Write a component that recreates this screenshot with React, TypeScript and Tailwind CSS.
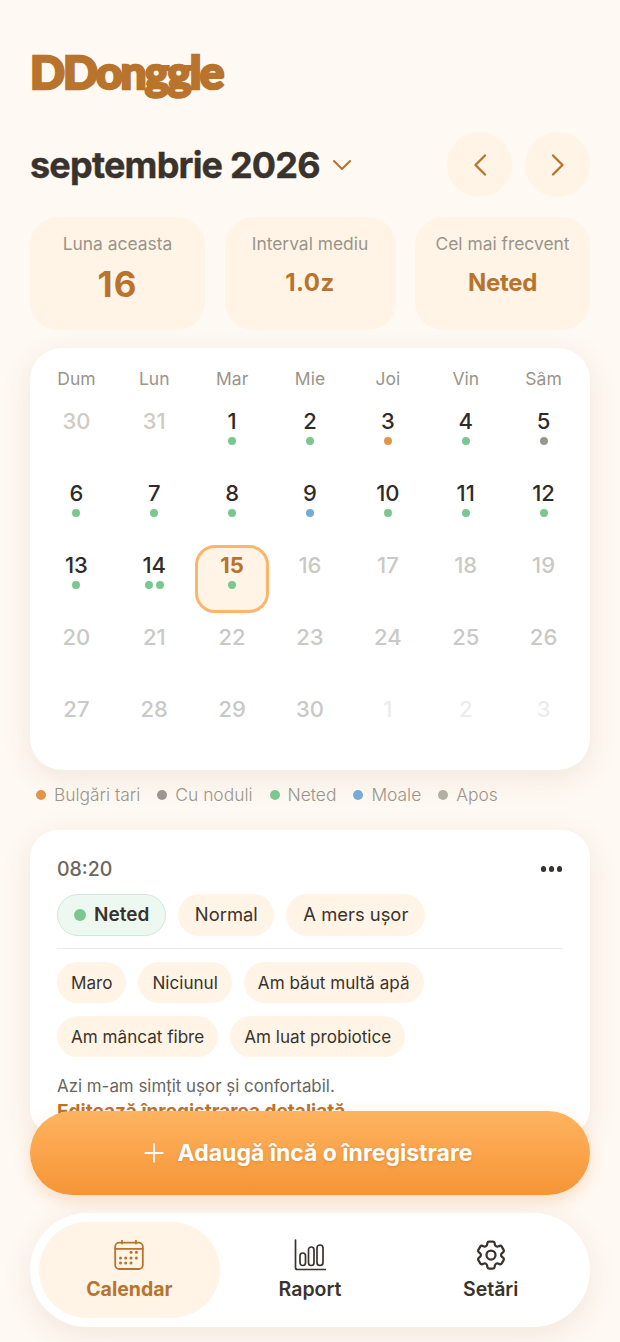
import { Plus } from "lucide-react";
import { HiOutlineCog6Tooth } from "react-icons/hi2";

const C = { g: "bg-[#7bc88f]", o: "bg-[#e0964a]", k: "bg-[#9a9690]", b: "bg-[#74acd6]" };

type Day = { n: number; tone: "muted" | "cur" | "future" | "next" | "sel"; dots?: string[] };

const days: Day[] = [
  { n: 30, tone: "muted" }, { n: 31, tone: "muted" },
  { n: 1, tone: "cur", dots: [C.g] }, { n: 2, tone: "cur", dots: [C.g] }, { n: 3, tone: "cur", dots: [C.o] }, { n: 4, tone: "cur", dots: [C.g] }, { n: 5, tone: "cur", dots: [C.k] },
  { n: 6, tone: "cur", dots: [C.g] }, { n: 7, tone: "cur", dots: [C.g] }, { n: 8, tone: "cur", dots: [C.g] }, { n: 9, tone: "cur", dots: [C.b] }, { n: 10, tone: "cur", dots: [C.g] }, { n: 11, tone: "cur", dots: [C.g] }, { n: 12, tone: "cur", dots: [C.g] },
  { n: 13, tone: "cur", dots: [C.g] }, { n: 14, tone: "cur", dots: [C.g, C.g] }, { n: 15, tone: "sel", dots: [C.g] },
  { n: 16, tone: "future" }, { n: 17, tone: "future" }, { n: 18, tone: "future" }, { n: 19, tone: "future" },
  { n: 20, tone: "future" }, { n: 21, tone: "future" }, { n: 22, tone: "future" }, { n: 23, tone: "future" }, { n: 24, tone: "future" }, { n: 25, tone: "future" }, { n: 26, tone: "future" },
  { n: 27, tone: "future" }, { n: 28, tone: "future" }, { n: 29, tone: "future" }, { n: 30, tone: "future" },
  { n: 1, tone: "next" }, { n: 2, tone: "next" }, { n: 3, tone: "next" },
];

const toneClass: Record<Day["tone"], string> = {
  muted: "text-[#cfcac2] font-medium",
  cur: "text-[#2f2b28] font-medium",
  future: "text-[#c9c9c6] font-medium",
  next: "text-[#ececea] font-medium",
  sel: "text-[#b8732d] font-bold",
};

function Pill({ children }: { children: React.ReactNode }) {
  return <span className="flex h-[41px] items-center rounded-full bg-[#fff4e6] px-[14px] text-[17.1px] text-[#3a332d]">{children}</span>;
}

function CalIcon() {
  const dots: [number, number][] = [
    [17, 12.3], [22.4, 12.3],
    [6.5, 18], [11.7, 18], [17, 18], [22.4, 18],
    [6.5, 23], [11.7, 23], [17, 23],
  ];
  return (
    <svg width="30" height="30" viewBox="0 0 30 30" fill="none" stroke="#b8732d" strokeWidth="1.8">
      <rect x="1.2" y="2.6" width="27.6" height="26.4" rx="4" />
      <path d="M1.2 8.8h27.6M8 0.6v3M22 0.6v3" strokeLinecap="round" />
      <g fill="#b8732d" stroke="none">
        {dots.map(([x, y]) => <circle key={`${x}-${y}`} cx={x} cy={y} r="1.5" />)}
      </g>
    </svg>
  );
}

function ChartIcon() {
  return (
    <svg width="32" height="32" viewBox="0 0 32 32" fill="none" stroke="#3a332d" strokeWidth="1.7">
      <path d="M1.5 1v27.5a2 2 0 0 0 2 2H31.5" strokeLinecap="round" />
      <rect x="6" y="14" width="5.5" height="12.5" rx="2.7" />
      <rect x="14.5" y="8" width="5.5" height="18.5" rx="2.7" />
      <rect x="23" y="6" width="6" height="20.5" rx="3" />
    </svg>
  );
}

function NavChevron({ d }: { d: string }) {
  return (
    <svg width="14" height="22" viewBox="0 0 14 22" fill="none" stroke="#b8732d" strokeWidth="2.3" strokeLinecap="round" strokeLinejoin="round">
      <path d={d} />
    </svg>
  );
}

export default function App() {
  return (
    <div className="relative h-[1342px] w-[620px] overflow-hidden bg-[#fff9f3] font-['Inter',sans-serif]">
      <main className="flex flex-col px-[30px]">
        <h1 className="mt-[40px] h-[64px] font-['Lato',sans-serif] text-[46px] leading-[64px] font-black tracking-[-1.9px] text-[#b8732d] [-webkit-text-stroke:2.5px_#b8732d]">DDonggle</h1>
        <div className="mt-[28px] flex h-[65px] items-center">
          <span className="text-[36px] font-bold tracking-[-0.8px] text-[#3a332d] [-webkit-text-stroke:0.4px_#3a332d]">septembrie 2026</span>
          <svg className="ml-[12px] mt-[1px]" width="20" height="12" viewBox="0 0 20 12" fill="none" stroke="#b8732d" strokeWidth="2.1" strokeLinecap="round" strokeLinejoin="round">
            <path d="M2 2l8 8 8-8" />
          </svg>
          <div className="ml-auto flex gap-[13px]">
            <button className="flex h-[65px] w-[65px] items-center justify-center rounded-full bg-[#fff4e6]"><NavChevron d="M12 1.5L2.5 11l9.5 9.5" /></button>
            <button className="flex h-[65px] w-[65px] items-center justify-center rounded-full bg-[#fff4e6]"><NavChevron d="M2 1.5L11.5 11 2 20.5" /></button>
          </div>
        </div>
        <div className="mt-[20px] grid grid-cols-[175px_171px_175px] gap-x-[19.5px]">
          {[
            ["Luna aceasta", "16", "text-[35px] mt-[8px] tracking-[1px]"],
            ["Interval mediu", "1.0z", "text-[24px] mt-[7px] tracking-[0.5px]"],
            ["Cel mai frecvent", "Neted", "text-[24px] mt-[7px] tracking-[-0.3px]"],
          ].map(([l, v, c]) => (
            <div key={l} className="flex h-[113px] flex-col items-center rounded-[28px] bg-[#fff4e6] pt-[15px]">
              <span className="text-[17.4px] leading-[24px] text-[#9a948b]">{l}</span>
              <span className={`${c} leading-[40px] font-bold text-[#b8732d]`}>{v}</span>
            </div>
          ))}
        </div>
        <section className="mt-[18px] h-[422px] rounded-[32px] bg-white px-[9.5px] pt-[19px] shadow-[0_8px_30px_rgba(120,80,30,0.1)]">
          <div className="grid grid-cols-7 gap-x-[4px]">
            {["Dum", "Lun", "Mar", "Mie", "Joi", "Vin", "Sâm"].map((d) => (
              <span key={d} className="text-center text-[17.5px] leading-[24px] text-[#9a948b]">{d}</span>
            ))}
          </div>
          <div className="mt-[10px] grid grid-cols-7 gap-[4px]">
            {days.map((d, i) => (
              <div key={i} className={`flex h-[68px] flex-col items-center rounded-[20px] ${d.tone === "sel" ? "border-[3px] border-[#fdb56c] bg-[#fff4e6] pt-[3px]" : "pt-[6px]"}`}>
                <span className={`text-[22px] leading-[28px] ${toneClass[d.tone]}`}>{d.n}</span>
                <div className="mt-[2px] flex gap-[3px]">
                  {d.dots?.map((c, j) => <span key={j} className={`h-[8px] w-[8px] rounded-full ${c}`} />)}
                </div>
              </div>
            ))}
          </div>
        </section>
        <div className="mt-[13px] flex h-[24px] items-center pl-[6px] text-[17.4px] font-light text-[#9a948b]">
          {[["Bulgări tari", C.o], ["Cu noduli", C.k], ["Neted", C.g], ["Moale", C.b], ["Apos", "bg-[#b3b0a3]"]].map(([t, c]) => (
            <span key={t} className="mr-[17px] flex items-center gap-[8px]">
              <span className={`h-[10px] w-[10px] rounded-full ${c}`} />{t}
            </span>
          ))}
        </div>
        <section className="mt-[23px] h-[306px] rounded-[28px] bg-white px-[27px] pt-[27px] shadow-[0_8px_30px_rgba(120,80,30,0.1)]">
          <div className="flex h-[26px] items-center justify-between">
            <span className="text-[19.5px] font-medium text-[#6b665e]">08:20</span>
            <span className="-mt-[2px] flex gap-[2.5px] pr-[1px]">
              <i className="h-[5.5px] w-[5.5px] rounded-full bg-[#3a332d]" /><i className="h-[5.5px] w-[5.5px] rounded-full bg-[#3a332d]" /><i className="h-[5.5px] w-[5.5px] rounded-full bg-[#3a332d]" />
            </span>
          </div>
          <div className="mt-[11px] flex gap-[12px]">
            <span className="flex h-[42px] items-center gap-[8px] rounded-full border border-[#cfeadb] bg-[#edf8f1] px-[16px] text-[19px] font-semibold text-[#3a332d]">
              <span className="h-[12px] w-[12px] rounded-full bg-[#7bc88f]" />Neted
            </span>
            <span className="flex h-[42px] items-center rounded-full bg-[#fff4e6] px-[16.5px] text-[18.4px] text-[#3a332d]">Normal</span>
            <span className="flex h-[42px] items-center rounded-full bg-[#fff4e6] px-[17px] text-[18.4px] text-[#3a332d]">A mers ușor</span>
          </div>
          <div className="mt-[12px] h-[1px] bg-[#eceae6]" />
          <div className="mt-[13px] flex flex-wrap gap-x-[12px] gap-y-[13px]">
            <Pill>Maro</Pill><Pill>Niciunul</Pill><Pill>Am băut multă apă</Pill><Pill>Am mâncat fibre</Pill><Pill>Am luat probiotice</Pill>
          </div>
          <p className="mt-[16px] text-[16.9px] leading-[26px] text-[#6b665e]">Azi m-am simțit ușor și confortabil.</p>
          <p className="text-[19px] leading-[26px] font-bold text-[#b8732d]">Editează înregistrarea detaliată</p>
        </section>
      </main>
      <div className="absolute inset-x-[30px] top-[1111px] flex flex-col gap-[18px]">
        <button className="flex h-[84px] items-center justify-center gap-[9px] rounded-full bg-gradient-to-b from-[#ffb35f] to-[#f59535] pr-[9px] text-[23px] font-bold text-white shadow-[0_6px_16px_rgba(230,140,50,0.25)] [text-shadow:0_1px_3px_rgba(160,90,20,0.3)]">
          <Plus size={30} strokeWidth={1.5} />Adaugă încă o înregistrare
        </button>
        <nav className="flex h-[114px] items-center rounded-full bg-white px-[9px] shadow-[0_8px_30px_rgba(120,80,30,0.1)]">
          <div className="flex h-[96px] w-[181px] flex-col items-center justify-center rounded-full bg-[#fff4e6] text-[19.5px] font-bold text-[#b8732d]">
            <span className="mb-[2px] flex h-[36px] items-center"><CalIcon /></span><span className="leading-[28px]">Calendar</span>
          </div>
          <div className="flex h-[96px] w-[181px] flex-col items-center justify-center text-[19.5px] font-semibold text-[#3a332d]">
            <span className="mb-[2px] flex h-[36px] items-center"><ChartIcon /></span><span className="leading-[28px]">Raport</span>
          </div>
          <div className="flex h-[96px] w-[181px] flex-col items-center justify-center text-[19.5px] font-semibold text-[#3a332d]">
            <span className="mb-[2px] flex h-[36px] items-center"><HiOutlineCog6Tooth size={36} /></span><span className="leading-[28px]">Setări</span>
          </div>
        </nav>
      </div>
    </div>
  );
}
